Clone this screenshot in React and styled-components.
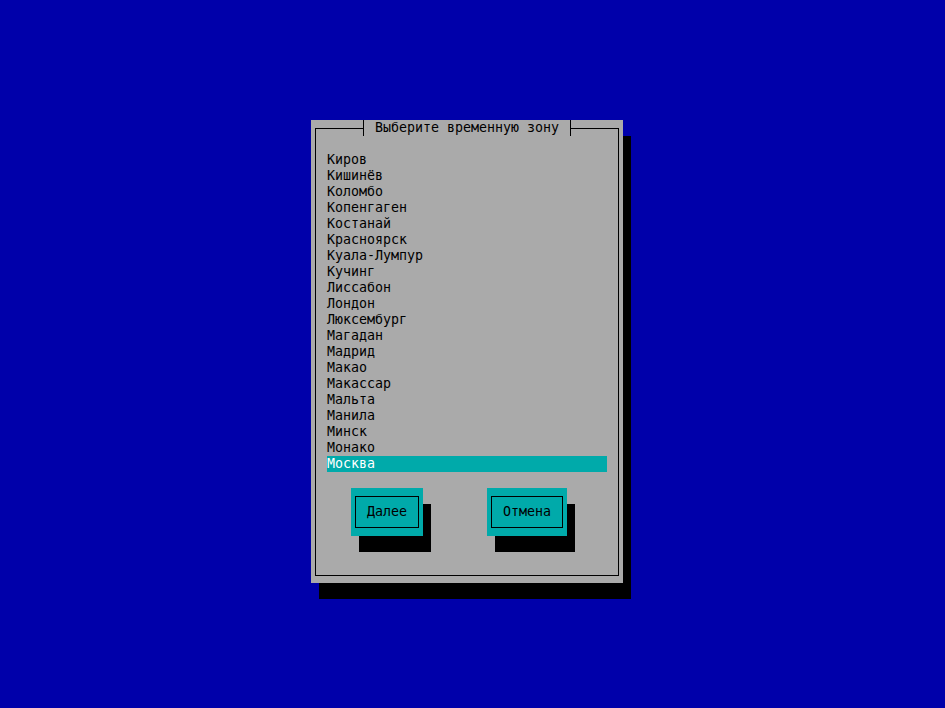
import React from 'react';
import styled, { createGlobalStyle } from 'styled-components';

const Global = createGlobalStyle`
  html, body { margin: 0; padding: 0; background: #0000aa; }
  body { font-family: "DejaVu Sans Mono", "Liberation Mono", monospace; }
`;

const Screen = styled.div`
  width: 945px;
  height: 708px;
  background: #0000aa;
  box-sizing: border-box;
  padding: 120px 0 0 311px;
`;

const Window = styled.div`
  width: 312px;
  height: 463px;
  background: #aaaaaa;
  box-shadow: 8px 16px 0 #000;
  box-sizing: border-box;
  padding: 8px 4px 7px 4px;
`;

const Frame = styled.div`
  position: relative;
  height: 100%;
  border: 1px solid #000;
  box-sizing: border-box;
  padding: 23px 0 0 11px;
`;

const Title = styled.div`
  position: absolute;
  top: -9px;
  left: 47px;
  height: 16px;
  line-height: 16px;
  padding: 0 11px;
  background: #aaaaaa;
  border-left: 1px solid #000;
  border-right: 1px solid #000;
  font-size: 13.3px;
  color: #000;
  white-space: nowrap;
`;

const List = styled.div`
  display: flex;
  flex-direction: column;
`;

const Item = styled.div`
  width: 280px;
  height: 16px;
  line-height: 16px;
  font-size: 13.3px;
  white-space: nowrap;
  color: ${p => (p.$selected ? '#ffffff' : '#000000')};
  background: ${p => (p.$selected ? '#00aaaa' : 'transparent')};
`;

const Buttons = styled.div`
  display: flex;
  gap: 64px;
  margin-top: 16px;
  padding-left: 24px;
`;

const Button = styled.div`
  background: #00aaaa;
  padding: 8px 4px;
  box-shadow: 8px 16px 0 #000;
`;

const ButtonInner = styled.div`
  height: 32px;
  box-sizing: border-box;
  border: 1px solid #000;
  padding: 0 11px;
  line-height: 30px;
  font-size: 13.3px;
  color: #000;
  white-space: nowrap;
`;

const zones = [
  'Киров', 'Кишинёв', 'Коломбо', 'Копенгаген', 'Костанай', 'Красноярск',
  'Куала-Лумпур', 'Кучинг', 'Лиссабон', 'Лондон', 'Люксембург', 'Магадан',
  'Мадрид', 'Макао', 'Макассар', 'Мальта', 'Манила', 'Минск', 'Монако', 'Москва',
];

export default function App() {
  return (
    <>
      <Global />
      <Screen>
        <Window>
          <Frame>
            <Title>Выберите временную зону</Title>
            <List>
              {zones.map(z => (
                <Item key={z} $selected={z === 'Москва'}>{z}</Item>
              ))}
            </List>
            <Buttons>
              <Button><ButtonInner>Далее</ButtonInner></Button>
              <Button><ButtonInner>Отмена</ButtonInner></Button>
            </Buttons>
          </Frame>
        </Window>
      </Screen>
    </>
  );
}
